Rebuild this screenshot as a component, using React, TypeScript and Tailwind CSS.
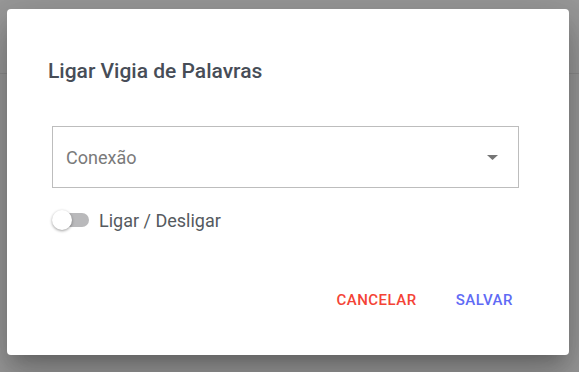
export default function App() {
  return (
    <div className="relative w-[579px] h-[372px] overflow-hidden bg-[#999999]" style={{ fontFamily: "Roboto, 'Liberation Sans', sans-serif" }}>
      <div className="absolute left-0 right-0 top-[73px] h-px bg-[#8c8c8c]" />
      <div className="absolute left-[7px] top-[9px] w-[562px] h-[346px] rounded-[4px] bg-white shadow-[0_11px_15px_-7px_rgba(0,0,0,0.2),0_24px_38px_3px_rgba(0,0,0,0.14),0_9px_46px_8px_rgba(0,0,0,0.12)] flex flex-col">
        <div className="pl-[41px] pt-[48px] text-[21px] leading-[28px] font-medium text-[#474d57]">Ligar Vigia de Palavras</div>
        <div className="pl-[45px] pr-[50px] pt-[41px]">
          <div className="h-[62px] border border-[#bdbdbd] flex items-center justify-between pl-[13px] pr-[20px]">
            <span className="text-[18px] text-[#7a7a7a]">Conexão</span>
            <svg width="11" height="5" viewBox="0 0 11 5"><path d="M0 0 L11 0 L5.5 5 Z" fill="#757575" /></svg>
          </div>
          <div className="mt-[20px] h-[24px] flex items-center">
            <div className="relative w-[37px] h-[20px] flex items-center">
              <div className="ml-[3px] w-[34px] h-[14px] rounded-full bg-[#b9b9bb]" />
              <div className="absolute left-0 top-0 w-[20px] h-[20px] rounded-full bg-white shadow-[0_1px_3px_rgba(0,0,0,0.4)]" />
            </div>
            <span className="ml-[10px] text-[18px] text-[#555a60]">Ligar / Desligar</span>
          </div>
        </div>
        <div className="mt-auto mb-[46px] flex justify-end pr-[56px] gap-[39px] text-[15px] leading-[18px] font-medium tracking-[0.5px]">
          <span className="text-[#f44336]">CANCELAR</span>
          <span className="text-[#5f6bf5]">SALVAR</span>
        </div>
      </div>
    </div>
  );
}
